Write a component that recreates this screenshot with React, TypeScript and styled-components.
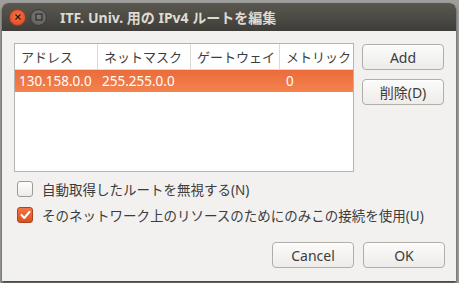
import React, {useState} from 'react';
import styled, {createGlobalStyle} from "styled-components";

const GlobalStyle = createGlobalStyle`
  html, body {
    margin: 0;
    padding: 0;
    background: #9e9e9c;
    font-family: "Noto Sans", "Noto Sans CJK JP", sans-serif;
    font-size: 13px;
  }
`

const Screen = styled.div`
  width: 459px;
  height: 283px;
  overflow: hidden;
  padding: 3px 3px 0 2px;
  box-sizing: border-box;
`

const Window = styled.div`
  width: 454px;
  height: 278px;
  border-radius: 6px 6px 0 0;
  background: #f2f1f0;
  box-shadow: 0 2px 3px rgba(0, 0, 0, 0.6);
  overflow: hidden;
  display: flex;
  flex-direction: column;
`

const TitleBar = styled.div`
  height: 28px;
  flex: none;
  background: linear-gradient(#5a5850, #3e3d39);
  display: flex;
  align-items: center;
  padding-left: 7px;
  gap: 4px;
`

const WinButton = styled.div<{ $close?: boolean }>`
  width: 15px;
  height: 15px;
  border-radius: 50%;
  display: flex;
  align-items: center;
  justify-content: center;
  background: ${p => p.$close
    ? "radial-gradient(circle at 50% 40%, #f5764a, #d9461c)"
    : "radial-gradient(circle at 50% 40%, #7b7a75, #5c5b56)"};
  border: 1px solid ${p => p.$close ? "#a8391a" : "#3a3935"};
`

const Title = styled.div`
  margin-left: 9px;
  color: #dfdbd2;
  font-weight: bold;
  font-size: 14px;
  white-space: nowrap;
`

const Body = styled.div`
  flex: 1;
  padding: 12px 10px 0 12px;
  display: flex;
  flex-direction: column;
`

const TopArea = styled.div`
  display: flex;
  gap: 8px;
`

const TableBox = styled.div`
  width: 340px;
  height: 129px;
  border: 1px solid #b6b4b0;
  background: #ffffff;
  box-sizing: border-box;
`

const HeaderRow = styled.div`
  display: grid;
  grid-template-columns: 83px 93px 89px 1fr;
  height: 25px;
  border-bottom: 1px solid #dcdad5;
`

const HeaderCell = styled.div<{ $last?: boolean }>`
  padding-left: 6px;
  display: flex;
  align-items: center;
  color: #3c3c3c;
  border-right: ${p => p.$last ? "none" : "1px solid #dcdad5"};
  white-space: nowrap;
`

const DataRow = styled.div<{ $selected?: boolean }>`
  display: grid;
  grid-template-columns: 83px 93px 89px 1fr;
  height: 22px;
  background: ${p => p.$selected ? "linear-gradient(#eb6b3a, #f3834f)" : "transparent"};
  color: ${p => p.$selected ? "#ffffff" : "#3c3c3c"};
`

const DataCell = styled.div<{ $indent?: number }>`
  padding-left: ${p => p.$indent ?? 4}px;
  display: flex;
  align-items: center;
  font-size: 13.5px;
  white-space: nowrap;
`

const SideButtons = styled.div`
  display: flex;
  flex-direction: column;
  gap: 9px;
  padding-top: 1px;
`

const Button = styled.button<{ $w?: number }>`
  width: ${p => p.$w ?? 82}px;
  height: 26px;
  border: 1px solid #b1aea8;
  border-radius: 4px;
  background: linear-gradient(#fbfbfa, #edecea);
  box-shadow: 0 1px 0 rgba(255, 255, 255, 0.8) inset;
  color: #3c3c3c;
  font-family: "Noto Sans", "Noto Sans CJK JP", sans-serif;
  font-size: 14px;
  padding: 0;
  display: flex;
  align-items: center;
  justify-content: center;
`

const Checks = styled.div`
  display: flex;
  flex-direction: column;
  gap: 10px;
  margin-top: 9px;
  padding-left: 3px;
`

const CheckRow = styled.label`
  display: flex;
  align-items: center;
  gap: 9px;
  color: #3c3c3c;
  font-size: 13.5px;
  white-space: nowrap;
  height: 16px;
`

const Box = styled.span<{ $on?: boolean }>`
  width: 14px;
  height: 14px;
  border-radius: 3px;
  flex: none;
  display: flex;
  align-items: center;
  justify-content: center;
  border: 1px solid ${p => p.$on ? "#b0421c" : "#9e9b96"};
  background: ${p => p.$on ? "linear-gradient(#ef7645, #d9531f)" : "linear-gradient(#ffffff, #ecebe9)"};
`

const Footer = styled.div`
  display: flex;
  justify-content: flex-end;
  gap: 9px;
  margin-top: 19px;
  padding-right: 1px;
`

const rows = [
    {addr: "130.158.0.0", mask: "255.255.0.0", gw: "", metric: "0"},
]

function App() {
    const [ignoreAuto, setIgnoreAuto] = useState(false)
    const [onlyThis, setOnlyThis] = useState(true)

    return (
        <Screen>
            <GlobalStyle/>
            <Window>
                <TitleBar>
                    <WinButton $close>
                        <svg width="8" height="8" viewBox="0 0 8 8">
                            <path d="M1.5 1.5 L6.5 6.5 M6.5 1.5 L1.5 6.5" stroke="#3a1a0e" strokeWidth="1.3"/>
                        </svg>
                    </WinButton>
                    <WinButton>
                        <svg width="8" height="8" viewBox="0 0 8 8">
                            <rect x="1" y="1" width="6" height="6" fill="none" stroke="#2e2d2a" strokeWidth="1.2"/>
                        </svg>
                    </WinButton>
                    <Title>ITF. Univ. 用の IPv4 ルートを編集</Title>
                </TitleBar>
                <Body>
                    <TopArea>
                        <TableBox>
                            <HeaderRow>
                                <HeaderCell>アドレス</HeaderCell>
                                <HeaderCell>ネットマスク</HeaderCell>
                                <HeaderCell>ゲートウェイ</HeaderCell>
                                <HeaderCell $last>メトリック</HeaderCell>
                            </HeaderRow>
                            {rows.map((r, i) => (
                                <DataRow key={i} $selected>
                                    <DataCell>{r.addr}</DataCell>
                                    <DataCell>{r.mask}</DataCell>
                                    <DataCell>{r.gw}</DataCell>
                                    <DataCell $indent={6}>{r.metric}</DataCell>
                                </DataRow>
                            ))}
                        </TableBox>
                        <SideButtons>
                            <Button>Add</Button>
                            <Button>削除(D)</Button>
                        </SideButtons>
                    </TopArea>
                    <Checks>
                        <CheckRow onClick={() => setIgnoreAuto(!ignoreAuto)}>
                            <Box $on={ignoreAuto}>
                                {ignoreAuto && <Tick/>}
                            </Box>
                            自動取得したルートを無視する(N)
                        </CheckRow>
                        <CheckRow onClick={() => setOnlyThis(!onlyThis)}>
                            <Box $on={onlyThis}>
                                {onlyThis && <Tick/>}
                            </Box>
                            そのネットワーク上のリソースのためにのみこの接続を使用(U)
                        </CheckRow>
                    </Checks>
                    <Footer>
                        <Button>Cancel</Button>
                        <Button>OK</Button>
                    </Footer>
                </Body>
            </Window>
        </Screen>
    );
}

const Tick = () => (
    <svg width="11" height="10" viewBox="0 0 11 10">
        <path d="M1.5 5 L4.3 8 L9.5 1.8" fill="none" stroke="#ffffff" strokeWidth="2" strokeLinecap="round" strokeLinejoin="round"/>
    </svg>
)

export default App;
